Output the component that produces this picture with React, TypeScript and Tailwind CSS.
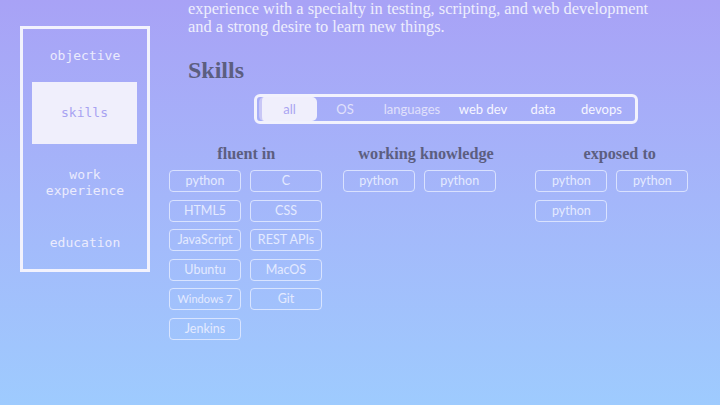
const navItems = [
  { label: ["objective"], h: "h-[53px]" },
  { label: ["skills"], h: "h-[62px]", active: true },
  { label: ["work", "experience"], h: "h-[78px]" },
  { label: ["education"], h: "h-[41px]" },
];

const tabs = [
  { label: "all", w: "w-[58px]", active: true },
  { label: "OS", w: "w-[56px]", dim: true },
  { label: "languages", w: "w-[78px]", dim: true },
  { label: "web dev", w: "w-[64px]" },
  { label: "data", w: "w-[56px]" },
  { label: "devops", w: "w-[61px]" },
];

const columns = [
  {
    title: "fluent in",
    w: "w-[156px]",
    skills: ["python", "C", "HTML5", "CSS", "JavaScript", "REST APIs", "Ubuntu", "MacOS", "Windows 7", "Git", "Jenkins"],
  },
  { title: "working knowledge", w: "w-[168px] ml-[19px]", skills: ["python", "python"] },
  { title: "exposed to", w: "w-[170px] ml-[26px]", skills: ["python", "python", "python"] },
];

function Chip({ label }: { label: string }) {
  const small = label === "Windows 7";
  return (
    <div
      className={`flex h-[22px] w-[72px] items-center justify-center rounded-[4px] border border-[#e6ecff]/80 pt-[1px] text-[#e4eaff] ${
        small ? "text-[11px]" : "text-[12.5px]"
      }`}
    >
      {label}
    </div>
  );
}

export default function App() {
  return (
    <div className="h-[405px] w-[720px] overflow-hidden bg-gradient-to-b from-[#a8a2f6] to-[#9ecbfe] font-['Lato',sans-serif]">
      <div className="flex">
        <nav className="ml-[20px] mt-[26px] flex h-[246px] w-[130px] flex-col border-[3px] border-[#f2f2fd] font-['DejaVu_Sans_Mono',monospace] text-[13px] text-[#ebebfd]">
          {navItems.map((item) => (
            <div
              key={item.label.join(" ")}
              className={`flex ${item.h} flex-col items-center justify-center leading-[16px] ${
                item.active ? "ml-[9px] mr-[10px] bg-[#f0effc] text-[#a8a3f2]" : ""
              }`}
            >
              {item.label.map((l) => (
                <span key={l}>{l}</span>
              ))}
            </div>
          ))}
        </nav>

        <main className="ml-[38px] w-[516px]">
          <p className="font-['Liberation_Serif',serif] text-[16.4px] leading-[18px] text-[#eeeefd]">
            experience with a specialty in testing, scripting, and web development
            <br />
            and a strong desire to learn new things.
          </p>

          <h2 className="mt-[20px] font-['Liberation_Serif',serif] text-[24px] font-bold leading-[28px] text-[#5c5e80]">
            Skills
          </h2>

          <div className="mt-[10px] flex justify-center">
            <div className="flex h-[30px] items-center rounded-[6px] border-[3px] border-[#f2f2fd] pl-[2px] pr-[3px] text-[13px]">
              {tabs.map((t) => (
                <div
                  key={t.label}
                  className={`flex h-[24px] ${t.w} items-center justify-center pt-[2px] ${
                    t.active
                      ? "rounded-[5px] border-l-[3px] border-[#c9c7f6] bg-[#f0effc] text-[#aaa5f2]"
                      : t.dim
                        ? "text-[#e0e0fb]"
                        : "text-[#f6f6ff]"
                  }`}
                >
                  {t.label}
                </div>
              ))}
            </div>
          </div>

          <div className="ml-[-19px] mt-[20px] flex items-start">
            {columns.map((col) => (
              <div key={col.title} className={col.w}>
                <h3 className="text-center font-['Liberation_Serif',serif] text-[16.2px] font-bold leading-[20px] text-[#5c5e80]">
                  {col.title}
                </h3>
                <div className="mt-[6px] flex flex-wrap gap-x-[9px] gap-y-[7.5px]">
                  {col.skills.map((s, i) => (
                    <Chip key={i} label={s} />
                  ))}
                </div>
              </div>
            ))}
          </div>
        </main>
      </div>
    </div>
  );
}
